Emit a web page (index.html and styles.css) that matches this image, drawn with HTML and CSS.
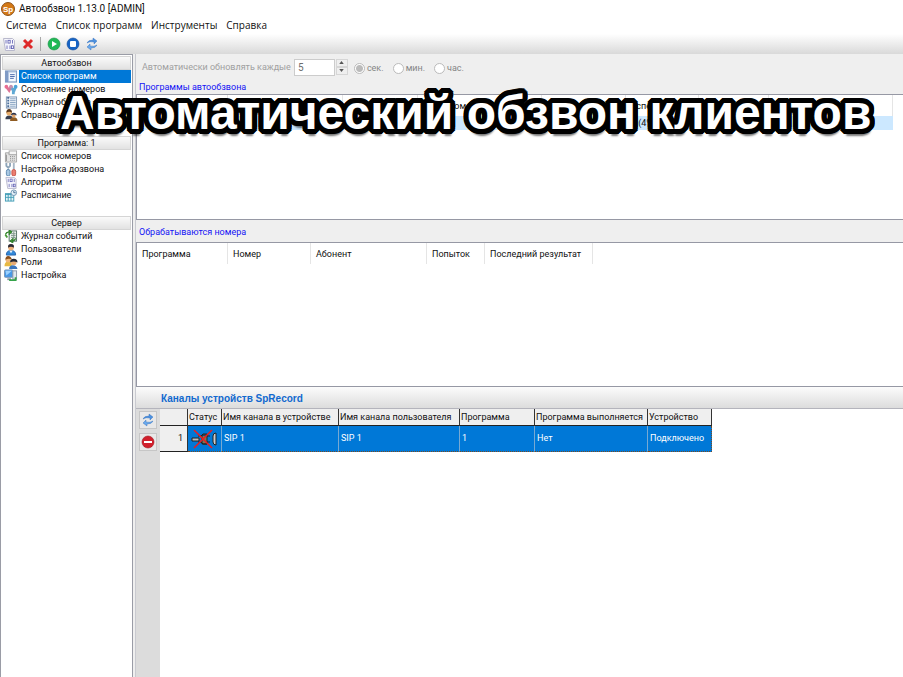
FILE: index.html
```html
<!DOCTYPE html>
<html lang="ru">
<head>
<meta charset="utf-8">
<title>Автообзвон 1.13.0 [ADMIN]</title>
<link rel="stylesheet" href="styles.css">
</head>
<body>
<svg class="defs" aria-hidden="true">
  <symbol id="i-list" viewBox="0 0 14 14"><rect x="1" y="1" width="12" height="12" fill="#c3d3e8" stroke="#7a94bd"/><rect x="1" y="1" width="3" height="12" fill="#7f9ac6"/><rect x="5" y="3" width="7" height="9" fill="#f5f9ff"/><path d="M6 5h5M6 7h5M6 9h4" stroke="#4465a8"/></symbol>
  <symbol id="i-state" viewBox="0 0 14 14"><path d="M2 4l3 4 2-4" fill="none" stroke="#dc7596" stroke-width="3"/><path d="M7 4l3 5 2-5M9.500 8v4" fill="none" stroke="#5fa9d4" stroke-width="3"/><circle cx="2" cy="4" r="2" fill="#e96d91"/><circle cx="7" cy="4" r="2" fill="#c692b0"/><circle cx="12" cy="4" r="2" fill="#4ca3db"/></symbol>
  <symbol id="i-journal" viewBox="0 0 14 14"><rect x="2" y="1" width="11" height="12" fill="#eef4fa" stroke="#8098b5"/><path d="M4 1v12" stroke="#4c6e9a" stroke-width="2" stroke-dasharray="2 1"/><path d="M6 3h6M6 5h6M6 7h6M6 9h6M6 11h6" stroke="#87a2c1"/></symbol>
  <symbol id="i-book" viewBox="0 0 14 14"><path d="M1 11q0-4 4-4t4 4z" fill="#383e50"/><path d="M6 13q0-4 4-4t4 4z" fill="#8f5b22"/><circle cx="5" cy="4" r="3" fill="#e9ae6c"/><path d="M2 4q0-4 3-4t3 4q-3-2-6 0" fill="#5a371d"/><circle cx="10" cy="7" r="2" fill="#e0a36a"/><path d="M7 7q0-3 3-3t3 3q-3-2-6 0" fill="#28324b"/></symbol>
  <symbol id="i-phone" viewBox="0 0 14 14"><path d="M1 3h4v2h8v8H1z" fill="#e2e2e2" stroke="#a6a6a6"/><rect x="5" y="1" width="8" height="4" fill="#f6f6f6" stroke="#aaa"/><path d="M2 5v7" stroke="#888"/><path d="M6 7h6M6 9h6M6 11h6" stroke="#888" stroke-dasharray="1 1"/></symbol>
  <symbol id="i-tools" viewBox="0 0 14 14"><path d="M2 0v3l2 2 2-2V0M4 4v6" fill="none" stroke="#8fa6ba" stroke-width="2"/><rect x="2" y="7" width="4" height="7" rx="2" fill="#a9c8e2" stroke="#5d88b0"/><path d="M10 0v7" stroke="#a7b6c4" stroke-width="2"/><rect x="8" y="7" width="4" height="7" rx="2" fill="#ec7d70" stroke="#c4544a"/></symbol>
  <symbol id="i-bin" viewBox="0 0 14 14"><path d="M1.500 1.500h9l2 2v10h-9z" fill="#f6f6fd" stroke="#b9b9cc"/><g fill="none" stroke="#5a5ab0" stroke-width=".8"><path d="M4 3v3.500M10.500 3v3.500M5 8.500V12M8 8.500V12"/><rect x="6" y="3.300" width="2.200" height="2.800"/><rect x="9.500" y="8.800" width="2" height="2.800"/></g></symbol>
  <symbol id="i-sched" viewBox="0 0 14 14"><rect x="1" y="5" width="9" height="8" fill="#e6f4f7" stroke="#3f9bb5"/><path d="M1 6h9M1 9h9M4 5v8M7 5v8" stroke="#3f9bb5"/><circle cx="10" cy="4" r="3" fill="#e7f3fa" stroke="#6e93b1"/><path d="M10 2v2h2" fill="none" stroke="#436a91"/></symbol>
  <symbol id="i-events" viewBox="0 0 14 14"><rect x="5" y="1" width="8" height="11" fill="#ecf2ee" stroke="#526f63"/><path d="M7 4h5M7 6h5M7 8h5M10 2v9" stroke="#7e958a"/><path d="M1 5q0-3 4-3M5 0v5l3-3zM12 9q0 3-4 3M9 9v5l-3-2z" fill="#469b37" stroke="#287925"/><path d="M1 5l2 3" stroke="#469b37" stroke-width="2"/></symbol>
  <symbol id="i-user" viewBox="0 0 14 14"><path d="M2 13q0-5 5-5t5 5z" fill="#328adb" stroke="#2362ad"/><path d="M5 8l2 3 2-3z" fill="#e4f3ff"/><circle cx="7" cy="5" r="3" fill="#eeb17a"/><path d="M4 5q-1-4 3-4t3 4q-3-2-6 0" fill="#2c2a35"/></symbol>
  <symbol id="i-roles" viewBox="0 0 14 14"><path d="M0 11q0-5 4-5t4 5z" fill="#e7b943"/><circle cx="4" cy="4" r="3" fill="#efb77b"/><path d="M1 4q0-4 3-4t4 4q-3-2-7 0" fill="#8a4f1c"/><path d="M5 14q0-4 4-4t5 4z" fill="#3975bd"/><circle cx="10" cy="7" r="3" fill="#e8ab75"/><path d="M6 7q0-4 4-4t4 4q-4-2-8 0" fill="#252934"/></symbol>
  <symbol id="i-setup" viewBox="0 0 14 14"><rect x="0" y="1" width="9" height="8" rx="1" fill="#4798e8" stroke="#7893b3"/><path d="M1 2h7L2 7z" fill="#9bd1ff"/><path d="M3 11h4" stroke="#8293a7" stroke-width="2"/><rect x="9" y="2" width="4" height="9" fill="#e1e9ef" stroke="#8696aa"/><path d="M5 12h7M12 9v4" stroke="#35a34a" stroke-width="2"/></symbol>
  <symbol id="i-refresh" viewBox="0 0 14 14"><path d="M2 6q1-3 6-3V1l4 3-3 3V5q-4-1-7 1z" fill="#4c91df" stroke="#2867b9" stroke-width=".4"/><path d="M12 8q-1 3-6 3v2l-4-3 3-3v2q4 1 7-1z" fill="#69a9ec" stroke="#2867b9" stroke-width=".4"/></symbol>
</svg>
<div class="window">
  <header>
    <div class="title">
      <svg class="logo" viewBox="0 0 14 14" aria-hidden="true"><circle cx="7" cy="7" r="6.500" fill="#d57916" stroke="#8e541d"/><text x="7" y="10" text-anchor="middle">Sp</text></svg>
      <span>Автообзвон 1.13.0 [ADMIN]</span>
    </div>
    <nav class="menu"><button>Система</button><button>Список программ</button><button>Инструменты</button><button>Справка</button></nav>
    <div class="toolbar">
      <button aria-label="Алгоритм"><svg><use href="#i-bin"/></svg></button>
      <button aria-label="Удалить"><svg viewBox="0 0 14 14"><path d="M3 3l8 8M11 3l-8 8" stroke="#de2828" stroke-width="3"/></svg></button>
      <i class="sep"></i>
      <button aria-label="Запустить"><svg viewBox="0 0 14 14"><circle cx="7" cy="7" r="6" fill="#20b856" stroke="#169143" stroke-width=".6"/><path d="M5 4l5 3-5 3z" fill="#fff"/></svg></button>
      <button aria-label="Остановить"><svg viewBox="0 0 14 14"><circle cx="7" cy="7" r="6" fill="#1764c4" stroke="#104b9a" stroke-width=".6"/><rect x="4" y="4" width="6" height="6" rx="1" fill="#fff"/></svg></button>
      <button aria-label="Обновить"><svg><use href="#i-refresh"/></svg></button>
    </div>
  </header>
  <div class="body">
    <aside>
      <section><h2>Автообзвон</h2>
        <a href="#" class="on"><svg><use href="#i-list"/></svg><span>Список программ</span></a>
        <a href="#"><svg><use href="#i-state"/></svg><span>Состояние номеров</span></a>
        <a href="#"><svg><use href="#i-journal"/></svg><span>Журнал обзвона</span></a>
        <a href="#"><svg><use href="#i-book"/></svg><span>Справочник</span></a>
      </section>
      <section><h2>Программа: 1</h2>
        <a href="#"><svg><use href="#i-phone"/></svg><span>Список номеров</span></a>
        <a href="#"><svg><use href="#i-tools"/></svg><span>Настройка дозвона</span></a>
        <a href="#"><svg><use href="#i-bin"/></svg><span>Алгоритм</span></a>
        <a href="#"><svg><use href="#i-sched"/></svg><span>Расписание</span></a>
      </section>
      <section><h2>Сервер</h2>
        <a href="#"><svg><use href="#i-events"/></svg><span>Журнал событий</span></a>
        <a href="#"><svg><use href="#i-user"/></svg><span>Пользователи</span></a>
        <a href="#"><svg><use href="#i-roles"/></svg><span>Роли</span></a>
        <a href="#"><svg><use href="#i-setup"/></svg><span>Настройка</span></a>
      </section>
    </aside>
    <main>
      <form class="refresh">
        <label for="every">Автоматически обновлять каждые</label>
        <span class="spin"><input id="every" type="text" value="5" disabled><span class="arrows"><button type="button" aria-label="Больше" disabled><svg viewBox="0 0 6 4"><path d="M3 0l3 4H0z"/></svg></button><button type="button" aria-label="Меньше" disabled><svg viewBox="0 0 6 4"><path d="M0 0h6L3 4z"/></svg></button></span></span>
        <label class="radio"><input type="radio" name="unit" checked disabled>сек.</label>
        <label class="radio"><input type="radio" name="unit" disabled>мин.</label>
        <label class="radio"><input type="radio" name="unit" disabled>час.</label>
      </form>
      <h3>Программы автообзвона</h3>
      <div class="pane first">
        <table class="list programs">
          <colgroup><col class="w91"><col class="w115"><col class="w75"><col class="w124"><col class="w84"><col class="w73"><col class="w70"><col class="w124"></colgroup>
          <thead><tr><th></th><th></th><th></th><th>Всего номеров</th><th></th><th>Успешно</th><th></th><th></th></tr></thead>
          <tbody><tr><td></td><td></td><td></td><td></td><td></td><td>1 (4%)</td><td></td><td></td></tr></tbody>
        </table>
      </div>
      <h3 class="second-title">Обрабатываются номера</h3>
      <div class="pane second">
        <table class="list numbers">
          <colgroup><col class="w91"><col class="w83"><col class="w116"><col class="w58"><col class="w108"></colgroup>
          <thead><tr><th>Программа</th><th>Номер</th><th>Абонент</th><th>Попыток</th><th>Последний результат</th></tr></thead>
        </table>
      </div>
      <section class="channels">
        <h4>Каналы устройств SpRecord</h4>
        <div class="chanbody">
          <div class="side">
            <button aria-label="Обновить"><svg><use href="#i-refresh"/></svg></button>
            <button aria-label="Отключить"><svg viewBox="0 0 14 14"><circle cx="7" cy="7" r="6" fill="#d11f2b" stroke="#a3141e" stroke-width=".6"/><rect x="3" y="6" width="8" height="2" fill="#fff"/></svg></button>
          </div>
          <div class="sheet">
            <table class="grid">
              <colgroup><col class="w28"><col class="w34"><col class="w117"><col class="w121"><col class="w75"><col class="w113"><col class="w64"></colgroup>
              <thead><tr><th></th><th>Статус</th><th>Имя канала в устройстве</th><th>Имя канала пользователя</th><th>Программа</th><th>Программа выполняется</th><th>Устройство</th></tr></thead>
              <tbody><tr><th>1</th><td class="status"><svg viewBox="0 0 28 20" role="img" aria-label="Не подключено"><path d="M3 9h7v3H3z" fill="#bbb" stroke="#222"/><path d="M9 7h3l2-2h4v2h3M9 13h3l2 2h4v-2h3M13 6v9h5V6z" fill="#77775a" stroke="#222"/><path d="M27 4q-3 0-3 3v6q0 3 3 3z" fill="#ccc" stroke="#222"/><path d="M5 1l18 18M23 1L5 19" stroke="#ef1c1c" stroke-width="1.500"/></svg></td><td>SIP 1</td><td>SIP 1</td><td>1</td><td>Нет</td><td>Подключено</td></tr></tbody>
            </table>
          </div>
        </div>
      </section>
    </main>
  </div>
</div>
<h1 class="banner">Автоматический обзвон клиентов</h1>
</body>
</html>
```
FILE: styles.css
```css
* { box-sizing: border-box; }
body { margin: 0; font: 9px/13px Roboto, sans-serif; color: #111; background: #fff; overflow: hidden; }
h1, h2, h3, h4 { margin: 0; font-weight: 400; font-size: inherit; }
button { margin: 0; padding: 0; border: 0; background: none; font: inherit; color: inherit; }
svg { display: block; width: 14px; height: 14px; flex: none; }
.defs { position: absolute; width: 0; height: 0; }
.window { display: flex; flex-direction: column; min-height: 100vh; }
.title { display: flex; align-items: center; gap: 4px; height: 17px; padding-left: 1px; font: 10px/14px Roboto, sans-serif; }
.logo text { font: bold 8px "Liberation Sans", sans-serif; fill: #fff; }
.menu { display: flex; gap: 9px; height: 17px; padding-left: 6px; font: 10px/17px "Open Sans", sans-serif; }
.toolbar { display: flex; align-items: center; gap: 5px; height: 20px; padding-left: 2px; background: linear-gradient(#fff, #d9d9d9); }
.toolbar .sep { width: 1px; height: 14px; margin-right: 1px; background: #a9a9a9; }
.body { display: flex; flex: 1; background: #efefef; }
aside { width: 133px; flex: none; padding: 1px 1px 0 1px; background: #fff; border: 1px solid #9a9ca6; border-bottom: 0; }
aside section { margin-bottom: 14px; }
aside h2 { height: 14px; line-height: 12px; text-align: center; background: linear-gradient(#fafafa, #e2e2e2); border: 1px solid #d5d5d5; }
aside a { display: flex; gap: 1px; height: 13px; padding-left: 2px; color: #111; text-decoration: none; }
aside a svg { height: 13px; }
aside a span { flex: 1; padding-left: 2px; }
aside .on span { background: #0078d7; color: #fff; }
main { flex: 1; min-width: 0; margin-left: 2px; display: flex; flex-direction: column; border-left: 1px solid #c9cad0; }
.refresh { display: flex; align-items: center; height: 26px; padding-left: 6px; color: #a0a0a0; }
.spin { display: flex; margin: 0 6px 0 3px; }
.spin input { width: 41px; height: 17px; padding: 0 3px; border: 1px solid #ccc; background: #fff; color: #6d6d6d; font: 10px Roboto, sans-serif; }
.arrows { display: flex; flex-direction: column; margin-left: 1px; }
.arrows button { display: grid; place-items: center; width: 12px; height: 8px; border: 1px solid #d6d6d6; }
.arrows svg { width: 5px; height: 3px; fill: #555; }
.radio { display: flex; align-items: center; gap: 2px; margin-right: 9px; padding-top: 3px; color: #858585; }
.radio input { appearance: none; width: 11px; height: 11px; margin: 0; border: 1px solid #bbb; border-radius: 50%; background: #fff; }
.radio input:checked { background: radial-gradient(#bbb 0 3px, #fff 4px); }
h3 { height: 14px; line-height: 14px; padding-left: 3px; color: #1414f5; }
.second-title { height: 22px; line-height: 24px; }
.pane { background: #fff; border: 1px solid #9698a4; border-right: 0; }
.first { height: 126px; }
.second { height: 145px; }
table { border-collapse: separate; border-spacing: 0; table-layout: fixed; }
th, td { padding: 0; font-weight: 400; text-align: left; white-space: nowrap; overflow: hidden; }
.programs { width: 756px; }
.numbers { width: 456px; }
.list th { height: 21px; padding: 2px 0 0 5px; border-right: 1px solid #e5e5e5; }
.list td { height: 14px; padding-left: 5px; background: #cce8ff; }
.w28 { width: 28px; } .w34 { width: 34px; } .w58 { width: 58px; } .w64 { width: 64px; } .w70 { width: 70px; }
.w73 { width: 73px; } .w75 { width: 75px; } .w83 { width: 83px; } .w84 { width: 84px; } .w91 { width: 91px; }
.w108 { width: 108px; } .w113 { width: 113px; } .w115 { width: 115px; } .w116 { width: 116px; }
.w117 { width: 117px; } .w121 { width: 121px; } .w124 { width: 124px; }
.channels { flex: 1; display: flex; flex-direction: column; }
h4 { height: 22px; padding-left: 25px; font: bold 10px/23px "Liberation Sans", sans-serif; color: #1169cf; background: linear-gradient(#fcfcfc, #dcdcdc); border-bottom: 1px solid #b4b4bc; }
.chanbody { flex: 1; display: flex; }
.side { width: 24px; flex: none; display: flex; flex-direction: column; align-items: center; gap: 4px; padding-top: 2px; background: #dcdcdc; }
.side button { display: grid; place-items: center; width: 18px; height: 18px; background: #e8e8e8; border: 1px solid #c6c6c6; }
.sheet { flex: 1; background: #fff; }
.grid { width: 552px; }
.grid th { height: 17px; padding-left: 1px; background: #efefef; border-right: 1px solid #333; border-bottom: 1px solid #222; }
.grid td { height: 26px; padding-left: 2px; background: #0078d7; color: #fff; border-right: 1px solid #77a9d3; border-bottom: 1px dotted #7a4a20; }
.grid tbody th { text-align: right; padding-right: 4px; }
.grid td:last-child { border-right: 1px dotted #7a4a20; }
.grid .status { padding-left: 1px; }
.grid .status svg { width: 28px; height: 20px; }
.banner {
  position: absolute; left: 60px; top: 87px;
  font: bold 48px/52px "Liberation Sans", sans-serif; color: #fff; white-space: nowrap;
  text-shadow:
    5px 0 #000, 5px 2px #000, 4px 3px #000, 3px 4px #000, 2px 5px #000, 0 5px #000,
    -2px 5px #000, -3px 4px #000, -4px 3px #000, -5px 2px #000, -5px 0 #000,
    -5px -2px #000, -4px -3px #000, -3px -4px #000, -2px -5px #000, 0 -5px #000,
    2px -5px #000, 3px -4px #000, 4px -3px #000, 5px -2px #000,
    2px 0 #000, -2px 0 #000, 0 2px #000, 0 -2px #000, 1px 7px 2px #0008;
}
```
